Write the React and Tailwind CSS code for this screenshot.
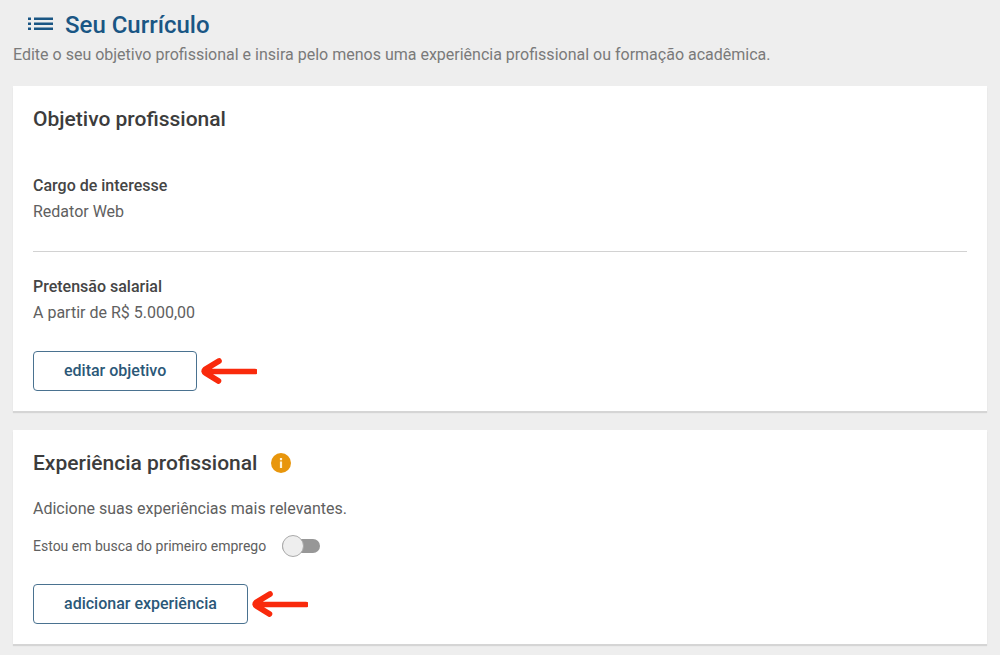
import { useState } from 'react';

/**
 * Red arrow pointing at an action
 */
function Arrow() {
  return (
    <svg className="w-14 h-7 ml-1 shrink-0" viewBox="0 0 56 28" fill="none" aria-hidden="true">
      <path
        d="M54 14.5H5M18 4L4 12.5Q2 14.5 4.500 16L17.500 24"
        stroke="#f92a0c"
        strokeWidth={5.6}
        strokeLinecap="round"
        strokeLinejoin="round"
      />
    </svg>
  );
}

function Card({ children }) {
  return (
    <section className="bg-white p-5 shadow-[0_2px_1px_rgba(0,0,0,0.1)]">
      {children}
    </section>
  );
}

function Action({ children }) {
  return (
    <div className="flex items-center mt-[25px]">
      <button
        type="button"
        className="h-10 px-[30px] rounded-[4px] border border-[#4a7290] bg-white text-base font-medium text-[#2b5878] hover:bg-gray-50"
      >
        {children}
      </button>
      <Arrow />
    </div>
  );
}

function Field({ label, value }) {
  return (
    <dl className="leading-[26px]">
      <dt className="font-medium text-[#454545]">{label}</dt>
      <dd className="text-[#606060]">{value}</dd>
    </dl>
  );
}

export default function App() {
  const [firstJob, setFirstJob] = useState(false);

  return (
    <main className="min-h-screen bg-[#eeeeee] px-[13px] pt-[9px] pb-[11px] font-[Roboto,sans-serif] text-base">
      {/* Header */}
      <header className="mb-[17px]">
        <h1 className="flex items-center pl-[15px] gap-3 text-2xl leading-8 font-medium text-[#1a5684]">
          <svg className="w-[25px] h-4" viewBox="0 0 25 16" fill="currentColor" aria-hidden="true">
            <path d="M0 .5h3v2.600H0zM0 5.500h3v2.600H0zM0 10.500h3v2.600H0zM6 .5h19v2.600H6zM6 5.500h19v2.600H6zM6 10.500h19v2.600H6z" />
          </svg>
          Seu Currículo
        </h1>
        <p className="leading-7 text-[#7a7a7a]">
          Edite o seu objetivo profissional e insira pelo menos uma experiência profissional ou formação acadêmica.
        </p>
      </header>

      <div className="flex flex-col gap-[19px]">
        {/* Objective */}
        <Card>
          <h2 className="mb-[41px] text-[21px] leading-[26px] font-medium text-[#3c3c3c]">
            Objetivo profissional
          </h2>
          <Field label="Cargo de interesse" value="Redator Web" />
          <hr className="mt-[26px] mb-[22px] border-[#d2d2d2]" />
          <Field label="Pretensão salarial" value="A partir de R$ 5.000,00" />
          <Action>editar objetivo</Action>
        </Card>

        {/* Experience */}
        <Card>
          <h2 className="flex items-center gap-[14px] text-[21px] leading-[26px] font-medium text-[#3c3c3c]">
            Experiência profissional
            <svg className="w-5 h-5" viewBox="0 0 20 20" role="img" aria-label="Informação">
              <circle cx="10" cy="10" r="10" fill="#e8960c" />
              <path d="M8.9 5h2.2v2.2H8.9zM8.9 8.6h2.2V15H8.9z" fill="#fff4d8" />
            </svg>
          </h2>
          <p className="mt-5 leading-[26px] text-[#606060]">Adicione suas experiências mais relevantes.</p>
          <label className="flex items-center gap-4 mt-[11px] h-[26px] w-fit text-sm text-[#606060]">
            Estou em busca do primeiro emprego
            <input
              type="checkbox"
              role="switch"
              checked={firstJob}
              onChange={(e) => setFirstJob(e.target.checked)}
              className="appearance-none flex items-center w-[38px] h-[14px] rounded-full bg-[#979797] before:block before:w-[22px] before:h-[22px] before:shrink-0 before:rounded-full before:border before:border-[#aaaaaa] before:bg-[#eeeeee] checked:before:ml-4"
            />
          </label>
          <Action>adicionar experiência</Action>
        </Card>
      </div>
    </main>
  );
}
